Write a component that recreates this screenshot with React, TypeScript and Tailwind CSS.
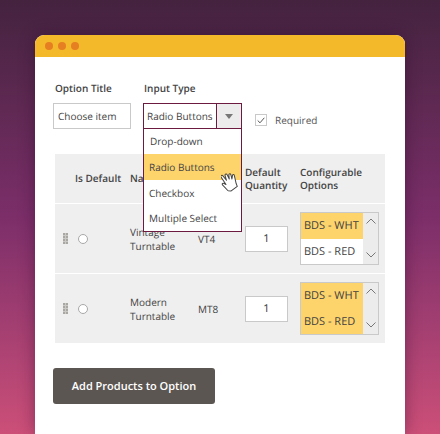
import React from 'react';

const font = "font-['Open_Sans','Noto_Sans',sans-serif]";

const options = [
  { label: 'Drop-down', cls: 'h-[25px] pl-[6px]' },
  { label: 'Radio Buttons', cls: 'h-[26px] pl-[5px] bg-[#fdd36c]' },
  { label: 'Checkbox', cls: 'h-[26px] pl-[5px]' },
  { label: 'Multiple Select', cls: 'h-[25px] pl-[5px]' },
];

const Handle = () => (
  <div className="grid grid-cols-2 gap-px w-[5px] bg-[#cbc9c5]">
    {Array.from({ length: 8 }).map((_, i) => (
      <span key={i} className="w-[2px] h-[2px] bg-[#a9a7a2]" />
    ))}
  </div>
);

const Chevron = ({ up }: { up?: boolean }) => (
  <svg width="10" height="6" viewBox="0 0 10 6" fill="none" stroke="#777" strokeWidth="1">
    <path d={up ? 'M0.5 5.5 L5 1 L9.5 5.5' : 'M0.5 0.5 L5 5 L9.5 0.5'} />
  </svg>
);

const ConfigList = ({ both }: { both?: boolean }) => (
  <div className="flex w-[79px] h-[53px] border border-[#c9c9c9] bg-white">
    <div className="w-[62px] text-[11px] text-[#3f3f3f]">
      <div className="h-[26px] pl-[3px] flex items-center bg-[#fdd36c]">BDS - WHT</div>
      <div className={`h-[25px] pl-[3px] flex items-center ${both ? 'bg-[#fdd36c]' : ''}`}>BDS - RED</div>
    </div>
    <div className="flex-1 bg-[#ececec] flex flex-col items-center justify-between pt-[5px] pb-[6px]">
      <Chevron up />
      <Chevron />
    </div>
  </div>
);

const Row = ({ name, sku, both }: { name: string[]; sku: string; both?: boolean }) => (
  <div className="grid grid-cols-[75px_68px_47px_55px_85px] items-center h-[69px] bg-[#efefef] text-[10px] leading-[14px] text-[#444]">
    <div className="flex items-center pl-[8px] gap-[10px]">
      <Handle />
      <span className="w-[10px] h-[10px] rounded-full border border-[#a8a8a8] bg-white" />
    </div>
    <div>
      {name.map((n) => (
        <div key={n}>{n}</div>
      ))}
    </div>
    <div>{sku}</div>
    <div className="w-[43px] h-[26px] border border-[#c9c9c9] bg-white flex items-center justify-center text-[11px] text-[#333]">
      1
    </div>
    <ConfigList both={both} />
  </div>
);

export default function App() {
  return (
    <div
      className={`${font} [text-rendering:geometricPrecision] w-[440px] h-[434px] overflow-hidden pt-[35px] pl-[35px] bg-gradient-to-b from-[#44233f] via-[#7c2e69] to-[#cc4f78]`}
    >
      <div className="w-[370px] h-[399px] rounded-t-[9px] overflow-hidden bg-white shadow-[0_0_16px_rgba(40,10,40,0.4)] relative">
        {/* Title bar */}
        <div className="h-[22px] bg-[#f4b92b] flex items-center gap-[5px] pl-[10px]">
          <span className="w-[8px] h-[8px] rounded-full bg-[#e67e22]" />
          <span className="w-[8px] h-[8px] rounded-full bg-[#e67e22]" />
          <span className="w-[8px] h-[8px] rounded-full bg-[#e67e22]" />
        </div>

        <div className="pl-[18px] pt-[24px]">
          {/* Option form */}
          <div className="flex">
            <div className="w-[78px] mr-[12px]">
              <div className="pl-[2px] h-[14px] leading-[14px] text-[10px] font-semibold text-[#444]">Option Title</div>
              <div className="mt-[8px] h-[26px] border border-[#c9c9c9] flex items-center pl-[4px] text-[10px] text-[#444]">
                Choose item
              </div>
            </div>
            <div className="w-[99px] mr-[13px] relative">
              <div className="pl-px h-[14px] leading-[14px] text-[10px] font-semibold text-[#444]">Input Type</div>
              <div className="mt-[8px] h-[26px] border border-[#6d1a40] flex">
                <div className="w-[73px] border-r border-[#6d1a40] flex items-center pl-[3px] text-[10px] text-[#444]">
                  Radio Buttons
                </div>
                <div className="flex-1 bg-[#ececec] flex items-center justify-center">
                  <span className="w-0 h-0 border-l-[4px] border-r-[4px] border-t-[5px] border-l-transparent border-r-transparent border-t-[#777]" />
                </div>
              </div>
              {/* Open dropdown */}
              <div className="absolute z-10 left-0 top-[47px] w-[99px] border border-[#6d1a40] bg-white text-[10px] text-[#444]">
                {options.map((o) => (
                  <div key={o.label} className={`flex items-center ${o.cls}`}>
                    {o.label}
                  </div>
                ))}
              </div>
            </div>
            <div className="flex items-center gap-[8px] mt-[33px] h-[12px]">
              <span className="w-[12px] h-[12px] border border-[#c9c9c9] flex items-center justify-center">
                <svg width="8" height="7" viewBox="0 0 8 7" fill="none" stroke="#555" strokeWidth="1">
                  <path d="M0.7 3.5 L3 5.8 L7.3 0.8" />
                </svg>
              </span>
              <span className="text-[10px] text-[#555]">Required</span>
            </div>
          </div>

          {/* Products table */}
          <div className="ml-[2px] mt-[25px] w-[330px] flex flex-col gap-px">
            <div className="grid grid-cols-[75px_68px_47px_55px_85px] items-center h-[49px] bg-[#efefef] text-[10px] leading-[13px] font-semibold text-[#444]">
              <div className="pl-[20px]">Is Default</div>
              <div>Name</div>
              <div />
              <div>
                Default
                <br />
                Quantity
              </div>
              <div>
                Configurable
                <br />
                Options
              </div>
            </div>
            <Row name={['Vintage', 'Turntable']} sku="VT4" />
            <Row name={['Modern', 'Turntable']} sku="MT8" both />
          </div>

          <button className="mt-[25px] w-[162px] h-[36px] rounded-[3px] bg-[#5c5652] text-white text-[11px] font-semibold">
            Add Products to Option
          </button>
        </div>

        {/* Hand cursor */}
        <svg
          className="absolute z-20 left-[186px] top-[137px]"
          width="18"
          height="20"
          viewBox="0 0 18 20"
          fill="#fff"
          stroke="#444"
          strokeWidth="1"
          strokeLinejoin="round"
        >
          <path
            transform="rotate(-14 9 10)"
            d="M5 18 L1 11 C0.5 9.5 2 9 3 10 L4.5 11.5 L1.5 3 C1.2 1.5 3 1 3.6 2.3 L6 7.5 L5.8 2.3 C6 1 7.8 1 8 2.3 L9 7 L9.6 2.8 C10 1.6 11.5 1.8 11.6 3 L11.6 7.6 L13 4.2 C13.6 3.2 15 3.6 14.8 4.8 L14.6 13 L15 16 L8 19 Z"
          />
        </svg>
      </div>
    </div>
  );
}
